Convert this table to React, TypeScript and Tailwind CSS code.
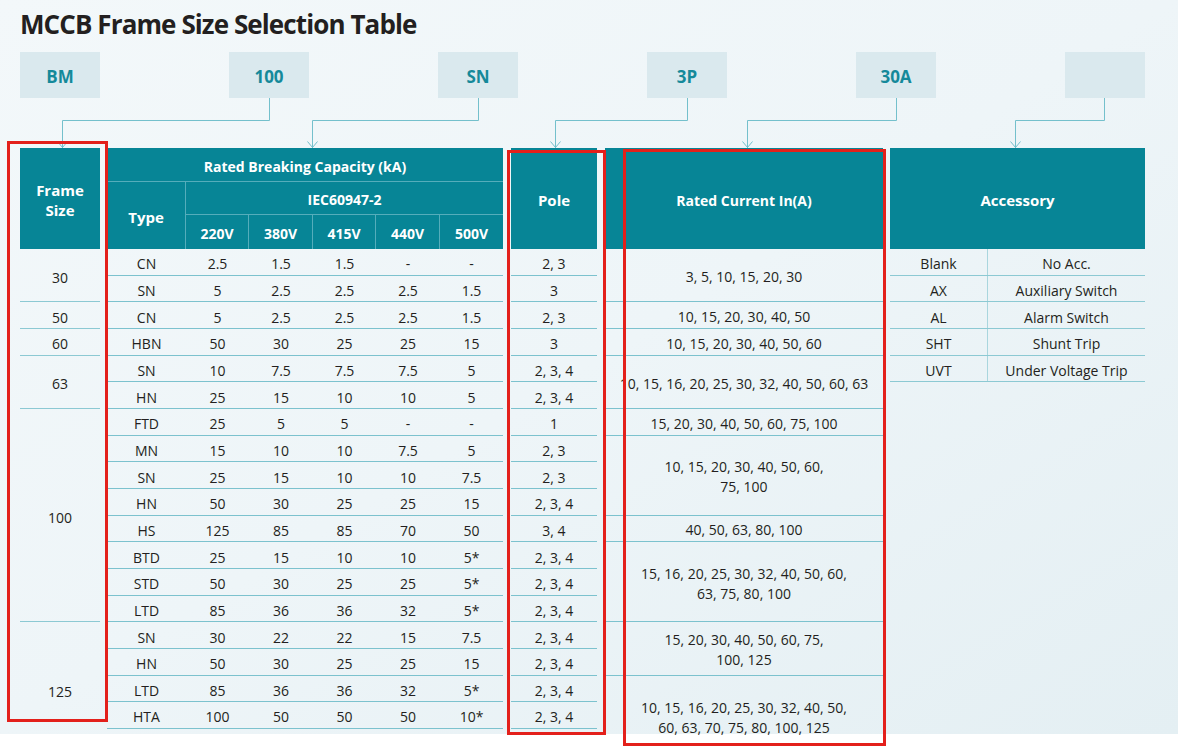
import React from 'react';

const codes = ['BM', '100', 'SN', '3P', '30A', ''];

const breaking = [
  { type: 'CN', v: ['2.5', '1.5', '1.5', '-', '-'], pole: '2, 3' },
  { type: 'SN', v: ['5', '2.5', '2.5', '2.5', '1.5'], pole: '3' },
  { type: 'CN', v: ['5', '2.5', '2.5', '2.5', '1.5'], pole: '2, 3' },
  { type: 'HBN', v: ['50', '30', '25', '25', '15'], pole: '3' },
  { type: 'SN', v: ['10', '7.5', '7.5', '7.5', '5'], pole: '2, 3, 4' },
  { type: 'HN', v: ['25', '15', '10', '10', '5'], pole: '2, 3, 4' },
  { type: 'FTD', v: ['25', '5', '5', '-', '-'], pole: '1' },
  { type: 'MN', v: ['15', '10', '10', '7.5', '5'], pole: '2, 3' },
  { type: 'SN', v: ['25', '15', '10', '10', '7.5'], pole: '2, 3' },
  { type: 'HN', v: ['50', '30', '25', '25', '15'], pole: '2, 3, 4' },
  { type: 'HS', v: ['125', '85', '85', '70', '50'], pole: '3, 4' },
  { type: 'BTD', v: ['25', '15', '10', '10', '5*'], pole: '2, 3, 4' },
  { type: 'STD', v: ['50', '30', '25', '25', '5*'], pole: '2, 3, 4' },
  { type: 'LTD', v: ['85', '36', '36', '32', '5*'], pole: '2, 3, 4' },
  { type: 'SN', v: ['30', '22', '22', '15', '7.5'], pole: '2, 3, 4' },
  { type: 'HN', v: ['50', '30', '25', '25', '15'], pole: '2, 3, 4' },
  { type: 'LTD', v: ['85', '36', '36', '32', '5*'], pole: '2, 3, 4' },
  { type: 'HTA', v: ['100', '50', '50', '50', '10*'], pole: '2, 3, 4' },
];

const voltCols = ['w-[63px]', 'w-[64px]', 'w-[63px]', 'w-[64px]', 'w-[63px]'];

// frame size groups (row spans written out as heights)
const frames = [
  { label: '30', h: 'h-[53.33px] border-b items-center pt-[4px]' },
  { label: '50', h: 'h-[26.67px] border-b items-center pt-[4px]' },
  { label: '60', h: 'h-[26.67px] border-b items-center pt-[4px]' },
  { label: '63', h: 'h-[53.33px] border-b items-center pt-[4px]' },
  { label: '100', h: 'h-[213.33px] border-b items-center pt-[4px]' },
  { label: '125', h: 'h-[106.67px] items-start pt-[59px]' },
];

const currents = [
  { text: ['3, 5, 10, 15, 20, 30'], h: 'h-[53.33px] border-b justify-center pt-[4px]' },
  { text: ['10, 15, 20, 30, 40, 50'], h: 'h-[26.67px] border-b justify-center pt-[4px]' },
  { text: ['10, 15, 20, 30, 40, 50, 60'], h: 'h-[26.67px] border-b justify-center pt-[4px]' },
  { text: ['10, 15, 16, 20, 25, 30, 32, 40, 50, 60, 63'], h: 'h-[53.33px] border-b justify-center pt-[4px]' },
  { text: ['15, 20, 30, 40, 50, 60, 75, 100'], h: 'h-[26.67px] border-b justify-center pt-[4px]' },
  { text: ['10, 15, 20, 30, 40, 50, 60,', '75, 100'], h: 'h-[80px] border-b justify-center pt-[4px]' },
  { text: ['40, 50, 63, 80, 100'], h: 'h-[26.67px] border-b justify-center pt-[4px]' },
  { text: ['15, 16, 20, 25, 30, 32, 40, 50, 60,', '63, 75, 80, 100'], h: 'h-[80px] border-b justify-center pt-[4px]' },
  { text: ['15, 20, 30, 40, 50, 60, 75,', '100, 125'], h: 'h-[53.33px] border-b justify-center pt-[4px]' },
  { text: ['10, 15, 16, 20, 25, 30, 32, 40, 50,', '60, 63, 70, 75, 80, 100, 125'], h: 'h-[53.33px] justify-start pt-[22px]' },
];

const accessories = [
  ['Blank', 'No Acc.'],
  ['AX', 'Auxiliary Switch'],
  ['AL', 'Alarm Switch'],
  ['SHT', 'Shunt Trip'],
  ['UVT', 'Under Voltage Trip'],
];

function Connectors() {
  const links = [
    [269, 62],
    [478, 312],
    [687, 555],
    [896, 747],
    [1104, 1015],
  ];
  return (
    <svg width="1178" height="50" className="block" fill="none" stroke="#74c0cc" strokeWidth="1">
      {links.map(([from, to]) => (
        <g key={from}>
          <path d={`M${from + 0.5} 0V22.5H${to + 0.5}V50`} />
          <path d={`M${to - 4.5} 43.5L${to + 0.5} 49.5L${to + 5.5} 43.5`} />
        </g>
      ))}
    </svg>
  );
}

export default function App() {
  return (
    <div className="relative w-[1178px] h-[747px] bg-white overflow-hidden font-['Open_Sans',sans-serif] text-[#231f20]">
      <div className="h-[734px] bg-gradient-to-br from-[#f3f8fa] via-[#eef5f8] to-[#e4eff3]">
        {/* Title */}
        <h1 className="pl-[20px] pt-[6px] h-[52px] text-[26px] leading-[36px] font-bold tracking-[-0.9px] text-[#231f20]">
          MCCB Frame Size Selection Table
        </h1>

        {/* Code boxes */}
        <div className="flex gap-[129px] pl-[20px]">
          {codes.map((c, i) => (
            <div
              key={i}
              className="w-[80px] h-[46px] pt-[3px] bg-[#dae9ee] flex items-center justify-center text-[17px] font-bold text-[#15899a]"
            >
              {c}
            </div>
          ))}
        </div>

        <Connectors />

        {/* Table */}
        <div className="flex pl-[20px] text-[14px]">
          {/* Frame size */}
          <div className="w-[80px] flex flex-col">
            <div className="h-[101px] pt-[3px] bg-[#078596] text-white font-bold text-[15px] leading-[20px] flex flex-col items-center justify-center">
              <span>Frame</span>
              <span>Size</span>
            </div>
            {frames.map((f) => (
              <div key={f.label} className={`${f.h} flex justify-center border-[#8cc9d3]`}>
                {f.label}
              </div>
            ))}
          </div>

          {/* Rated breaking capacity */}
          <div className="ml-[7px] w-[396px] flex flex-col">
            <div className="h-[101px] bg-[#078596] text-white font-bold flex flex-col">
              <div className="h-[34px] pt-[3px] flex items-center justify-center border-b border-[#55adbb]">
                Rated Breaking Capacity (kA)
              </div>
              <div className="flex flex-1">
                <div className="w-[79px] pt-[3px] flex items-center justify-center border-r border-[#55adbb] text-[15px]">
                  Type
                </div>
                <div className="flex-1 flex flex-col">
                  <div className="h-[33px] pt-[3px] flex items-center justify-center border-b border-[#55adbb]">
                    IEC60947-2
                  </div>
                  <div className="flex flex-1">
                    {['220V', '380V', '415V', '440V', '500V'].map((v, i) => (
                      <div
                        key={v}
                        className={`${voltCols[i]} pt-[3px] flex items-center justify-center ${i < 4 ? 'border-r border-[#55adbb]' : ''}`}
                      >
                        {v}
                      </div>
                    ))}
                  </div>
                </div>
              </div>
            </div>
            {breaking.map((r, i) => (
              <div key={i} className="h-[26.67px] pt-[4px] flex border-b border-[#7cc2ce]">
                <div className="w-[79px] flex items-center justify-center">{r.type}</div>
                {r.v.map((v, j) => (
                  <div key={j} className={`${voltCols[j]} flex items-center justify-center`}>
                    {v}
                  </div>
                ))}
              </div>
            ))}
          </div>

          {/* Pole */}
          <div className="ml-[8px] w-[86px] flex flex-col">
            <div className="h-[101px] pt-[3px] bg-[#078596] text-white font-bold text-[15px] flex items-center justify-center">
              Pole
            </div>
            {breaking.map((r, i) => (
              <div key={i} className="h-[26.67px] pt-[4px] flex items-center justify-center border-b border-[#7cc2ce]">
                {r.pole}
              </div>
            ))}
          </div>

          {/* Rated current */}
          <div className="ml-[8px] w-[278px] flex flex-col">
            <div className="h-[101px] pt-[3px] bg-[#078596] text-white font-bold flex items-center justify-center">
              Rated Current In(A)
            </div>
            {currents.map((c, i) => (
              <div
                key={i}
                className={`${c.h} flex flex-col items-center leading-[20px] border-[#7cc2ce] whitespace-nowrap`}
              >
                {c.text.map((t) => (
                  <span key={t}>{t}</span>
                ))}
              </div>
            ))}
          </div>

          {/* Accessory */}
          <div className="ml-[7px] w-[255px] flex flex-col">
            <div className="h-[101px] pt-[3px] bg-[#078596] text-white font-bold text-[15px] flex items-center justify-center">
              Accessory
            </div>
            {accessories.map(([code, name]) => (
              <div key={code} className="h-[26.67px] flex border-b border-[#8cc9d3]">
                <div className="w-[98px] pt-[4px] flex items-center justify-center border-r border-[#a9d6de]">{code}</div>
                <div className="flex-1 pt-[4px] flex items-center justify-center">{name}</div>
              </div>
            ))}
          </div>
        </div>
      </div>

      {/* Red highlight boxes */}
      <div className="absolute left-[7px] top-[141px] w-[101px] h-[581px] border-[3px] border-[#e3201b]" />
      <div className="absolute left-[507px] top-[150px] w-[99px] h-[585px] border-[3px] border-[#e3201b]" />
      <div className="absolute left-[623px] top-[149px] w-[263px] h-[597px] border-[3px] border-[#e3201b]" />
    </div>
  );
}
